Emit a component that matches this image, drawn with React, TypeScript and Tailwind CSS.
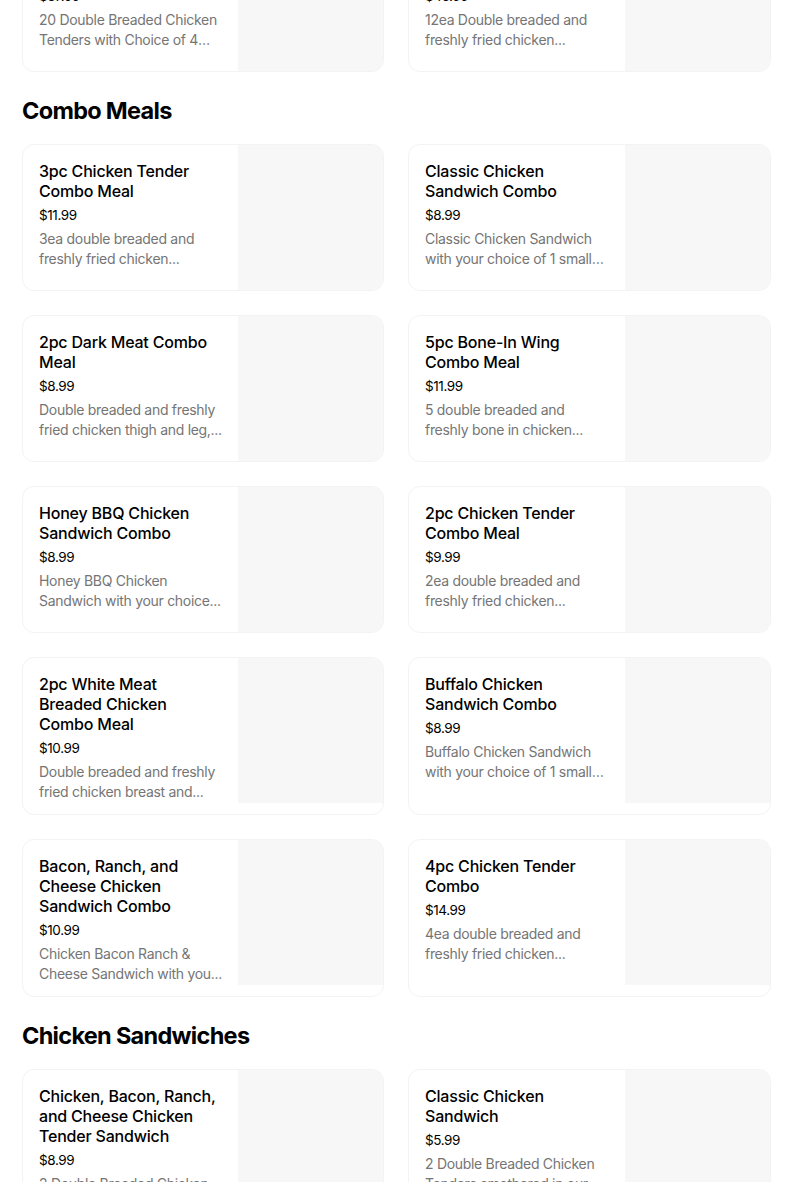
import React from 'react';

type Item = { name: string; price: string; desc: string };

const prevItems: Item[] = [
  { name: '20pc Chicken Tender Family Meal', price: '$37.99', desc: '20 Double Breaded Chicken Tenders with Choice of 4 large sides and sauces.' },
  { name: '12pc Chicken Family Meal', price: '$46.99', desc: '12ea Double breaded and freshly fried chicken...' },
];

const comboItems: Item[] = [
  { name: '3pc Chicken Tender Combo Meal', price: '$11.99', desc: '3ea double breaded and freshly fried chicken...' },
  { name: 'Classic Chicken Sandwich Combo', price: '$8.99', desc: 'Classic Chicken Sandwich with your choice of 1 small side and a drink.' },
  { name: '2pc Dark Meat Combo Meal', price: '$8.99', desc: 'Double breaded and freshly fried chicken thigh and leg,...' },
  { name: '5pc Bone-In Wing Combo Meal', price: '$11.99', desc: '5 double breaded and freshly bone in chicken...' },
  { name: 'Honey BBQ Chicken Sandwich Combo', price: '$8.99', desc: 'Honey BBQ Chicken Sandwich with your choice...' },
  { name: '2pc Chicken Tender Combo Meal', price: '$9.99', desc: '2ea double breaded and freshly fried chicken...' },
  { name: '2pc White Meat Breaded Chicken Combo Meal', price: '$10.99', desc: 'Double breaded and freshly fried chicken breast and...' },
  { name: 'Buffalo Chicken Sandwich Combo', price: '$8.99', desc: 'Buffalo Chicken Sandwich with your choice of 1 small side and a drink.' },
  { name: 'Bacon, Ranch, and Cheese Chicken Sandwich Combo', price: '$10.99', desc: 'Chicken Bacon Ranch & Cheese Sandwich with you...' },
  { name: '4pc Chicken Tender Combo', price: '$14.99', desc: '4ea double breaded and freshly fried chicken...' },
];

const sandwichItems: Item[] = [
  { name: 'Chicken, Bacon, Ranch, and Cheese Chicken Tender Sandwich', price: '$8.99', desc: '2 Double Breaded Chicken Tenders with bacon, ranch and melted cheese.' },
  { name: 'Classic Chicken Sandwich', price: '$5.99', desc: '2 Double Breaded Chicken Tenders smothered in our signature sauce.' },
];

function ItemCard({ item }: { item: Item }) {
  return (
    <div className="flex border border-[#f3f3f3] rounded-xl overflow-hidden bg-white">
      <div className="flex-1 min-w-0 px-4 pt-4 pb-3">
        <h3 className="text-[16px] leading-5 font-medium text-black tracking-[-0.2px]">{item.name}</h3>
        <p className="mt-1 text-[13.5px] leading-5 text-black tracking-[-0.4px]">{item.price}</p>
        <p className="mt-1 text-[14px] leading-5 text-[#757575] tracking-[-0.3px] line-clamp-2">{item.desc}</p>
      </div>
      <div className="w-[145px] h-[145px] shrink-0 bg-[#f7f7f7]" />
    </div>
  );
}

function Section({ title, items }: { title?: string; items: Item[] }) {
  return (
    <section>
      {title && (
        <h2 className="mt-[23px] mb-[17px] text-[23.5px] leading-8 font-bold text-black tracking-[-0.7px]">{title}</h2>
      )}
      <div className="grid grid-cols-[362px_363px] gap-6">
        {items.map((item) => (
          <ItemCard key={item.name} item={item} />
        ))}
      </div>
    </section>
  );
}

export default function App() {
  return (
    <div className="h-[1182px] overflow-hidden bg-white" style={{ fontFamily: 'Inter, "Noto Sans", sans-serif' }}>
      <div className="w-[749px] ml-[22px] -mt-[75px]">
        <Section items={prevItems} />
        <Section title="Combo Meals" items={comboItems} />
        <Section title="Chicken Sandwiches" items={sandwichItems} />
      </div>
    </div>
  );
}
